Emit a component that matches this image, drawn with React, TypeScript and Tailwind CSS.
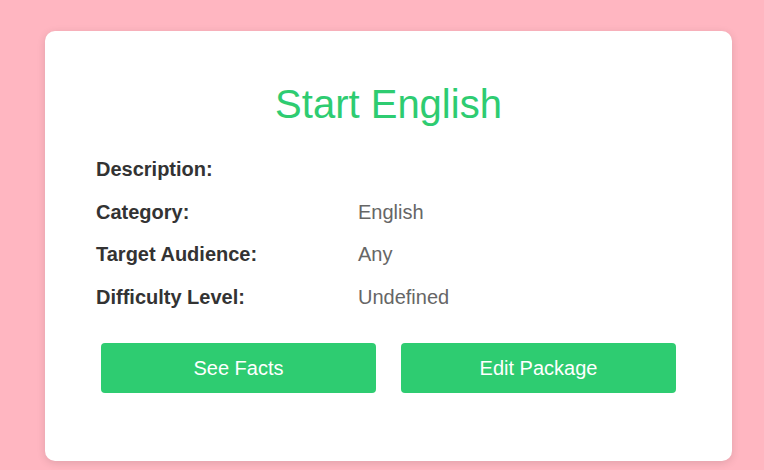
import React from 'react';

const rows = [
  { label: 'Description:', value: '' },
  { label: 'Category:', value: 'English' },
  { label: 'Target Audience:', value: 'Any' },
  { label: 'Difficulty Level:', value: 'Undefined' },
];

const App: React.FC = () => {
  return (
    <div
      className="min-h-[470px] bg-[#ffb6c1] pt-[31px] pl-[45px] pr-[32px] pb-[9px]"
      style={{ fontFamily: '"Liberation Sans", Arial, sans-serif' }}
    >
      <div className="w-[687px] h-[430px] bg-white rounded-[10px] shadow-[0_2px_8px_rgba(0,0,0,0.12)] px-[51px] pt-[50px]">
        <h1 className="text-center text-[40px] leading-[46px] text-[#2ecc71] font-normal">
          Start English
        </h1>

        <div className="mt-[31px] flex flex-col gap-[19.5px]">
          {rows.map((row) => (
            <div key={row.label} className="flex text-[20px] leading-[23px] h-[23px]">
              <div className="w-[262px] font-bold text-[#333333]">{row.label}</div>
              <div className="text-[#666666]">{row.value}</div>
            </div>
          ))}
        </div>

        <div className="mt-[34px] flex gap-[25px] px-[5px]">
          <button className="flex-1 h-[50px] rounded-[4px] bg-[#2ecc71] text-white text-[20px]">
            See Facts
          </button>
          <button className="flex-1 h-[50px] rounded-[4px] bg-[#2ecc71] text-white text-[20px]">
            Edit Package
          </button>
        </div>
      </div>
    </div>
  );
};

export default App;
